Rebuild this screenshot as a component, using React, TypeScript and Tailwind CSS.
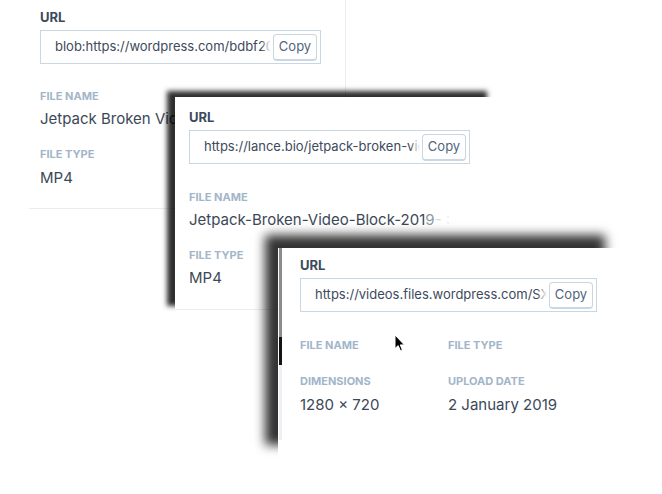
import React from 'react'

const font = { fontFamily: 'Inter, "Liberation Sans", Arial, sans-serif' }

function UrlField({ text, width }: { text: string; width: string }) {
  return (
    <div className={`h-[34px] ${width} border border-[#c8d7e1] bg-white flex items-center pl-[14px] pr-[3px]`}>
      <div className="relative flex-1 min-w-0 overflow-hidden whitespace-nowrap text-[13px] text-[#3d4a5c]">
        {text}
        <div className="absolute right-0 top-0 h-full w-[10px] bg-gradient-to-r from-white/0 to-white" />
      </div>
      <button className="ml-[2px] h-[27px] w-[44px] shrink-0 rounded-[4px] border border-[#c8d7e1] border-b-2 bg-white text-[13px] text-[#4f6680] leading-none">
        Copy
      </button>
    </div>
  )
}

function Label({ children, dark }: { children: React.ReactNode; dark?: boolean }) {
  return dark ? (
    <div className="text-[13px] leading-[16px] font-bold text-[#3d4a5c]">{children}</div>
  ) : (
    <div className="text-[11px] leading-[14px] font-bold text-[#a2b5c9]">{children}</div>
  )
}

function Value({ children }: { children: React.ReactNode }) {
  return <div className="text-[15px] leading-[20px] text-[#3c4858] whitespace-nowrap">{children}</div>
}

export default function App() {
  return (
    <div className="relative w-[662px] h-[494px] bg-white overflow-hidden" style={font}>
      {/* back sidebar */}
      <div className="absolute left-0 top-0 w-[346px] h-[260px] border-r border-[#ebeef1]">
        <div className="ml-[29px] pl-[11px] pt-[9px] pb-[20px] border-b border-[#ebeef1]">
          <Label dark>URL</Label>
          <div className="mt-[5px]">
            <UrlField text="blob:https://wordpress.com/bdbf2049-aa3c" width="w-[281px]" />
          </div>
          <div className="mt-[25px]"><Label>FILE NAME</Label></div>
          <div className="mt-[6px]"><Value>Jetpack Broken Video Block</Value></div>
          <div className="mt-[18px]"><Label>FILE TYPE</Label></div>
          <div className="mt-[7px]"><Value>MP4</Value></div>
        </div>
      </div>

      {/* middle window */}
      <div className="absolute left-[175px] top-[97px] w-[320px] h-[215px] bg-white shadow-[-8px_-6px_5px_rgba(0,0,0,0.82)]">
        <div className="pl-[14px] pt-[12px] pb-[21px] border-b border-[#ebeef1]">
          <Label dark>URL</Label>
          <div className="mt-[5px]">
            <UrlField text="https://lance.bio/jetpack-broken-video-block" width="w-[281px]" />
          </div>
          <div className="mt-[26px]"><Label>FILE NAME</Label></div>
          <div className="mt-[6px]">
            <Value>
              Jetpack-Broken-Video-Block-201<span className="text-[#8f99a5]">9</span>
              <span className="text-[#d5dae0]">-</span>
              <span className="text-[#eef1f4]"> :</span>
            </Value>
          </div>
          <div className="mt-[18px]"><Label>FILE TYPE</Label></div>
          <div className="mt-[6px]"><Value>MP4</Value></div>
        </div>
      </div>

      {/* front window */}
      <div className="absolute left-[278px] top-[248px] w-[340px] h-[210px] bg-white shadow-[-13px_-13px_10px_rgba(0,0,0,0.8)] flex">
        <div className="ml-[1px] w-[3px] flex flex-col">
          <div className="h-[89px] bg-[#8c8c8c]" />
          <div className="h-[28px] bg-[#141414]" />
          <div className="h-[75px] bg-[#eef0f3]" />
        </div>
        <div className="pl-[18px] pt-[9px]">
          <Label dark>URL</Label>
          <div className="mt-[5px]">
            <UrlField text="https://videos.files.wordpress.com/SXjGj3" width="w-[297px]" />
          </div>
          <div className="grid grid-cols-[148px_1fr]">
            <div className="mt-[26px]"><Label>FILE NAME</Label></div>
            <div className="mt-[26px]"><Label>FILE TYPE</Label></div>
            <div className="mt-[22px]"><Label>DIMENSIONS</Label></div>
            <div className="mt-[22px]"><Label>UPLOAD DATE</Label></div>
            <div className="mt-[7px]"><Value>1280 × 720</Value></div>
            <div className="mt-[7px]"><Value>2 January 2019</Value></div>
          </div>
        </div>
      </div>

      {/* mouse cursor */}
      <svg className="absolute left-[394px] top-[334px]" width="12" height="19" viewBox="0 0 12 19">
        <path d="M1 1 L1 14.5 L4.2 11.6 L6.4 16.8 L8.4 16 L6.3 10.9 L10.4 10.9 Z" fill="#000" stroke="#fff" strokeWidth="1" strokeLinejoin="round" />
      </svg>
    </div>
  )
}
